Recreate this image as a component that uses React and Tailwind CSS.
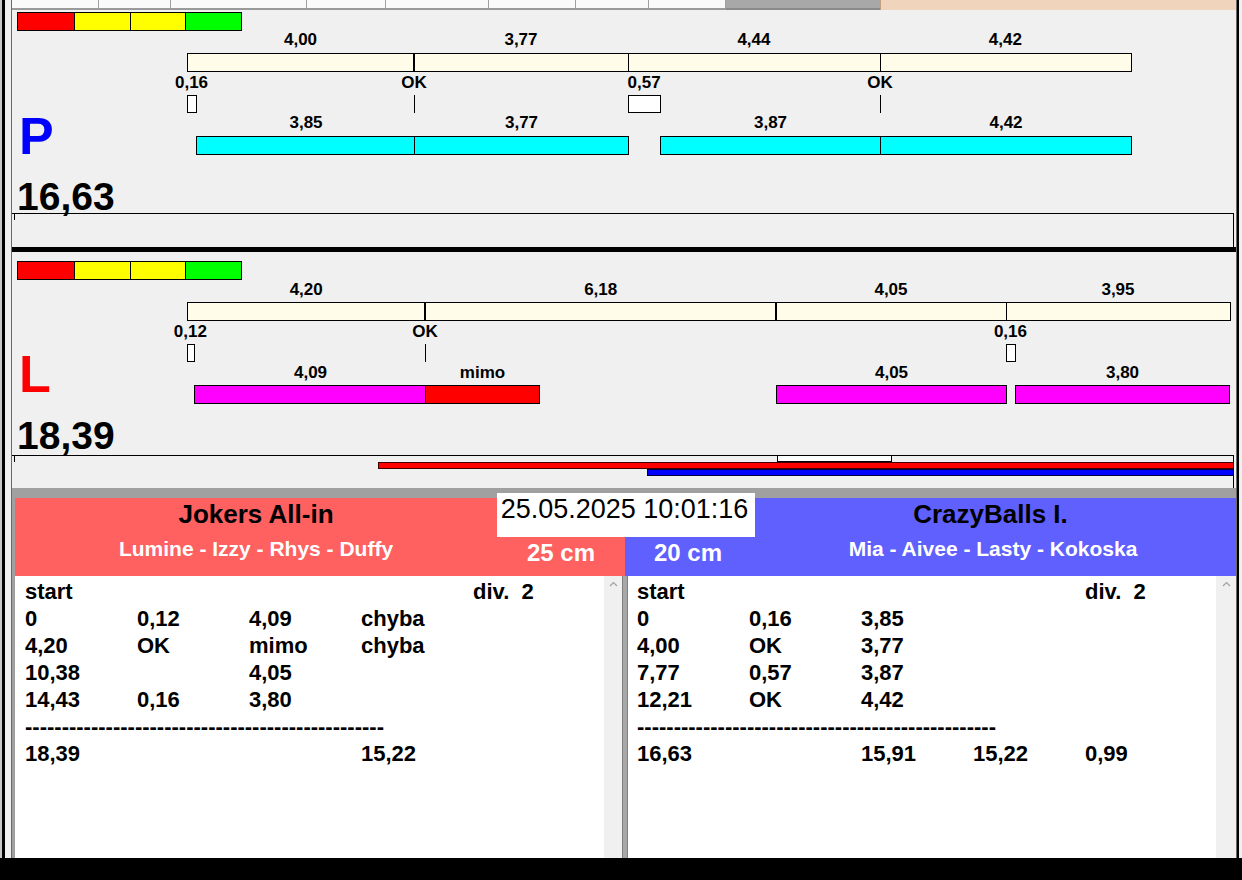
import React from "react";

// px per second on the lane canvas, x of time 0 (canvas-local)
const K = 56.75;
const X0 = 175;
const px = (t) => X0 + t * K;

const lanes = [
  {
    letter: "P",
    letterColor: "text-[#0000ff]",
    total: "16,63",
    height: "h-[237px]",
    pos: {
      color: "top-[2px]",
      topLabel: "top-[21px]",
      bar: "top-[43px]",
      reactLabel: "top-[64px]",
      mark: "top-[85px]",
      lowLabel: "top-[104px]",
      low: "top-[126px]",
      letter: "top-[100px]",
      total: "top-[167px]",
    },
    top: [
      { a: 0, b: 4.0, label: "4,00", thick: true },
      { a: 4.0, b: 7.77, label: "3,77" },
      { a: 7.77, b: 12.21, label: "4,44" },
      { a: 12.21, b: 16.63, label: "4,42" },
    ],
    react: [
      { t: 0, r: 0.16, label: "0,16" },
      { t: 4.0, label: "OK" },
      { t: 7.77, r: 0.57, label: "0,57" },
      { t: 12.21, label: "OK" },
    ],
    low: [
      { a: 0.16, b: 4.01, label: "3,85", cls: "bg-[#00ffff]" },
      { a: 4.0, b: 7.77, label: "3,77", cls: "bg-[#00ffff]" },
      { a: 8.34, b: 12.21, label: "3,87", cls: "bg-[#00ffff]" },
      { a: 12.21, b: 16.63, label: "4,42", cls: "bg-[#00ffff]" },
    ],
    extra: false,
  },
  {
    letter: "L",
    letterColor: "text-[#ff0000]",
    total: "18,39",
    height: "h-[236px]",
    pos: {
      color: "top-[9px]",
      topLabel: "top-[29px]",
      bar: "top-[50px]",
      reactLabel: "top-[71px]",
      mark: "top-[92px]",
      lowLabel: "top-[112px]",
      low: "top-[133px]",
      letter: "top-[96px]",
      total: "top-[164px]",
    },
    top: [
      { a: 0, b: 4.2, label: "4,20", thick: true },
      { a: 4.2, b: 10.38, label: "6,18", thick: true },
      { a: 10.38, b: 14.43, label: "4,05" },
      { a: 14.43, b: 18.38, label: "3,95" },
    ],
    react: [
      { t: 0, r: 0.12, label: "0,12" },
      { t: 4.2, label: "OK" },
      { t: 14.43, r: 0.16, label: "0,16" },
    ],
    low: [
      { a: 0.12, b: 4.21, label: "4,09", cls: "bg-[#ff00ff]" },
      { a: 4.2, w: 115, label: "mimo", cls: "bg-[#ff0000]" },
      { a: 10.38, b: 14.43, label: "4,05", cls: "bg-[#ff00ff]" },
      { a: 14.59, b: 18.36, label: "3,80", cls: "bg-[#ff00ff]" },
    ],
    extra: true,
  },
];

const segBox = (s) => {
  const l = Math.round(px(s.a));
  const w = s.w ? s.w : Math.round(px(s.b)) - l + (s.thick ? 0 : 1);
  return { l, w };
};

function Label({ x, top, children }) {
  return (
    <div
      className={`absolute ${top} -translate-x-1/2 whitespace-nowrap text-[17px] font-bold leading-none`}
      style={{ left: x }}
    >
      {children}
    </div>
  );
}

function Lane({ lane }) {
  const p = lane.pos;
  return (
    <div className={`relative shrink-0 ${lane.height} bg-[#f0f0f0]`}>
      {/* colour scale */}
      <div className={`absolute left-[5px] ${p.color} flex h-[19px] border border-black`}>
        <div className="w-[56px] bg-[#ff0000]" />
        <div className="w-[56px] border-l border-black bg-[#ffff00]" />
        <div className="w-[55px] border-l border-black bg-[#ffff00]" />
        <div className="w-[56px] border-l border-black bg-[#00ff00]" />
      </div>

      {/* throws */}
      {lane.top.map((s, i) => {
        const { l, w } = segBox(s);
        return (
          <React.Fragment key={"t" + i}>
            <Label x={(px(s.a) + px(s.b)) / 2} top={p.topLabel}>
              {s.label}
            </Label>
            <div
              className={`absolute ${p.bar} h-[19px] border border-black bg-[#fffde9]`}
              style={{ left: l, width: w }}
            />
          </React.Fragment>
        );
      })}

      {/* reactions */}
      {lane.react.map((r, i) => {
        const l = Math.round(px(r.t));
        const cx = r.r ? px(r.t) + (r.r * K) / 2 : l;
        return (
          <React.Fragment key={"r" + i}>
            <Label x={cx} top={p.reactLabel}>
              {r.label}
            </Label>
            {r.r ? (
              <div
                className={`absolute ${p.mark} h-[18px] border border-black bg-white`}
                style={{ left: l, width: Math.round(r.r * K) + 1 }}
              />
            ) : (
              <div className={`absolute ${p.mark} h-[18px] w-px bg-black`} style={{ left: l }} />
            )}
          </React.Fragment>
        );
      })}

      {/* runs */}
      {lane.low.map((s, i) => {
        const { l, w } = segBox(s);
        return (
          <React.Fragment key={"l" + i}>
            <Label x={l + w / 2} top={p.lowLabel}>
              {s.label}
            </Label>
            <div
              className={`absolute ${p.low} h-[19px] border border-black ${s.cls}`}
              style={{ left: l, width: w }}
            />
          </React.Fragment>
        );
      })}

      <div className={`absolute left-[7px] ${p.letter} text-[52px] font-bold leading-none ${lane.letterColor}`}>
        {lane.letter}
      </div>
      <div className={`absolute left-[5px] ${p.total} text-[39px] font-bold leading-none`}>{lane.total}</div>

      {/* timeline strip */}
      <div className="absolute left-0 top-[203px] bottom-0 w-[1222px] border-t border-r border-black" />
      <div className="absolute left-[2px] top-[203px] h-[7px] w-px bg-black" />
      {lane.extra && (
        <>
          <div className="absolute left-[765px] top-[203px] h-[7px] w-[115px] border border-black bg-white" />
          <div className="absolute left-[366px] top-[210px] h-[7px] w-[856px] border border-[#400000] bg-[#ff0000]" />
          <div className="absolute left-[635px] top-[217px] h-[7px] w-[587px] border border-[#000040] bg-[#0000ff]" />
        </>
      )}
    </div>
  );
}

function Chevron() {
  return (
    <svg width="9" height="6" viewBox="0 0 9 6" className="mx-auto mt-[5px]">
      <polyline points="1,5 4.5,1.5 8,5" fill="none" stroke="#a0a0a0" strokeWidth="1.2" />
    </svg>
  );
}

const leftRows = [
  ["start", "", "", "", "div.  2"],
  ["0", "0,12", "4,09", "chyba", ""],
  ["4,20", "OK", "mimo", "chyba", ""],
  ["10,38", "", "4,05", "", ""],
  ["14,43", "0,16", "3,80", "", ""],
  "dash",
  ["18,39", "", "", "15,22", ""],
];

const rightRows = [
  ["start", "", "", "", "div.  2"],
  ["0", "0,16", "3,85", "", ""],
  ["4,00", "OK", "3,77", "", ""],
  ["7,77", "0,57", "3,87", "", ""],
  ["12,21", "OK", "4,42", "", ""],
  "dash",
  ["16,63", "", "15,91", "15,22", "0,99"],
];

function ScoreList({ rows, pad }) {
  return (
    <div className={`flex-1 bg-white ${pad} pt-[2px] text-[22px] font-bold leading-[27px] text-black`}>
      {rows.map((r, i) =>
        r === "dash" ? (
          <div key={i} className="whitespace-pre">
            {"-".repeat(49)}
          </div>
        ) : (
          <div key={i} className="grid grid-cols-[112px_112px_112px_112px_auto] whitespace-pre">
            {r.map((c, j) => (
              <span key={j}>{c}</span>
            ))}
          </div>
        )
      )}
    </div>
  );
}

const tabs = [87, 72, 136, 79, 103, 87, 73, 77];

export default function App() {
  return (
    <div className="flex h-[880px] w-[1242px] flex-col overflow-hidden bg-[#f0f0f0] font-['Liberation_Sans',Arial,sans-serif] text-black">
      <div className="flex min-h-0 flex-1">
        {/* left window frame */}
        <div className="flex w-[12px] shrink-0">
          <div className="w-[2px] bg-[#c8c8c8]" />
          <div className="w-[3px] bg-black" />
          <div className="w-[6px] bg-[#f0f0f0]" />
          <div className="w-px bg-[#696969]" />
        </div>

        <div className="flex w-[1224px] flex-col">
          {/* tab strip */}
          <div className="flex h-[10px] shrink-0">
            <div className="flex h-[10px] border-b-2 border-[#9a9a9a]">
              {tabs.map((w, i) => (
                <div key={i} className="h-[8px] border-r border-[#a0a0a0] bg-[#fafafa]" style={{ width: w }} />
              ))}
            </div>
            <div className="h-[10px] w-[154px] border-b-2 border-[#8a8a8a] bg-[#a8a8a8]" />
            <div className="h-[11px] flex-1 border-l border-[#c0a080] bg-[#f0d4bc]" />
          </div>

          <Lane lane={lanes[0]} />
          <div className="h-[5px] shrink-0 bg-black" />
          <Lane lane={lanes[1]} />
          <div className="h-[10px] shrink-0 bg-[#a0a0a0]" />

          {/* teams */}
          <div className="flex min-h-0 flex-1 flex-col bg-[#a0a0a0] pl-[3px]">
            <div className="grid shrink-0 grid-cols-[482px_128px_130px_481px] grid-rows-[39px_39px]">
              <div className="flex justify-center bg-[#ff6060] pt-[3px] text-[26px] font-bold leading-none">
                Jokers All-in
              </div>
              <div className="relative z-10 col-span-2 -mt-[5px] flex h-[44px] justify-center bg-white pr-[3px] pt-[3px] text-[27px] leading-none">
                25.05.2025 10:01:16
              </div>
              <div className="flex justify-center bg-[#6060ff] pr-[10px] pt-[3px] text-[26px] font-bold leading-none">
                CrazyBalls I.
              </div>
              <div className="flex justify-center bg-[#ff6060] pt-[1px] text-[21px] font-bold leading-none text-white">
                Lumine - Izzy - Rhys - Duffy
              </div>
              <div className="flex justify-center bg-[#ff6060] pt-[4px] text-[24px] font-bold leading-none text-white">
                25 cm
              </div>
              <div className="flex justify-center bg-[#6060ff] pr-[4px] pt-[4px] text-[24px] font-bold leading-none text-white">
                20 cm
              </div>
              <div className="flex justify-center bg-[#6060ff] pr-[5px] pt-[1px] text-[21px] font-bold leading-none text-white">
                Mia - Aivee - Lasty - Kokoska
              </div>
            </div>

            <div className="flex min-h-0 flex-1">
              <ScoreList rows={leftRows} pad="pl-[10px]" />
              <div className="w-[18px] shrink-0 bg-[#f0f0f0]">
                <Chevron />
              </div>
              <div className="w-[6px] shrink-0 border-x border-[#808080] bg-[#a8a8a8]" />
              <ScoreList rows={rightRows} pad="pl-[9px]" />
              <div className="w-[20px] shrink-0 bg-[#f0f0f0]">
                <Chevron />
              </div>
            </div>
          </div>
        </div>

        {/* right window frame */}
        <div className="flex w-[6px] shrink-0">
          <div className="w-px bg-[#696969]" />
          <div className="w-[2px] bg-black" />
          <div className="w-[3px] bg-[#f0f0f0]" />
        </div>
      </div>
      <div className="h-[22px] shrink-0 bg-black" />
    </div>
  );
}
